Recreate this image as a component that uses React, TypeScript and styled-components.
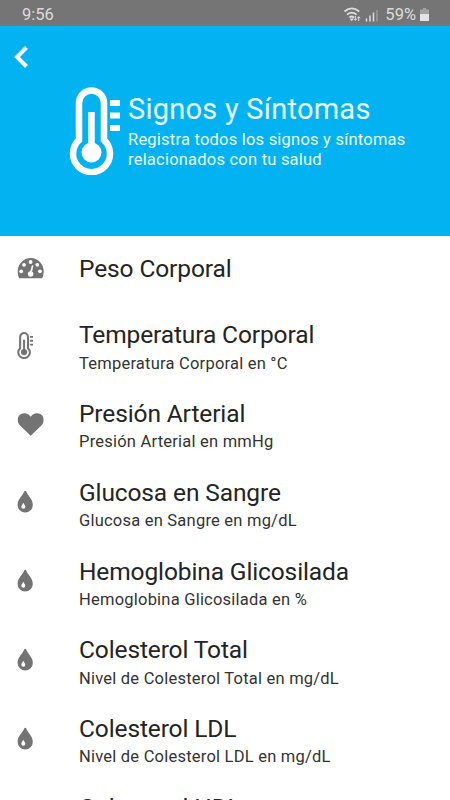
import React from "react";
import styled, { createGlobalStyle } from "styled-components";

const GlobalStyle = createGlobalStyle`
  * { box-sizing: border-box; }
  body { margin: 0; background: #fff; font-family: Roboto, sans-serif; }
`;

const Screen = styled.div`
  width: 450px;
  height: 800px;
  overflow: hidden;
  background: #fff;
  display: flex;
  flex-direction: column;
`;

const StatusBar = styled.div`
  flex: none;
  height: 26px;
  background: #757575;
  color: #dcdcdc;
  display: flex;
  align-items: center;
  padding: 3px 21px 0 22px;
  font-size: 16.5px;
  line-height: 22px;
`;

const Clock = styled.span`
  flex: 1;
`;

const Battery = styled.span`
  margin: 0 4px 0 6px;
  letter-spacing: 0;
`;

const Header = styled.header`
  flex: none;
  height: 210px;
  background: #03b3f1;
  color: #e9fbff;
`;

const BackButton = styled.button`
  display: block;
  border: 0;
  padding: 0 0 0 14px;
  margin-top: 19px;
  height: 24px;
  background: none;
  line-height: 0;
`;

const Banner = styled.div`
  display: flex;
  padding: 18px 0 0 69px;
`;

const BannerText = styled.div`
  padding: 4px 0 0 8px;
`;

const Heading = styled.h1`
  margin: 0;
  font-size: 29px;
  line-height: 36px;
  font-weight: 400;
  letter-spacing: 0.24px;
  white-space: nowrap;
`;

const Lead = styled.p`
  margin: 3px 0 0;
  font-size: 16.5px;
  line-height: 20px;
  letter-spacing: 0.22px;
  white-space: nowrap;
`;

const List = styled.ul`
  flex: 1;
  min-height: 0;
  overflow: hidden;
  margin: 0;
  padding: 0;
  list-style: none;
`;

const Row = styled.li<{ $single?: boolean }>`
  display: flex;
  height: ${(p) => (p.$single ? "73.5px" : "78.75px")};
  padding: ${(p) => (p.$single ? "19px" : "11.9px")} 0 0 17px;
`;

const IconSlot = styled.span<{ $top: number }>`
  width: 62px;
  flex: none;
  padding-top: ${(p) => p.$top}px;
  line-height: 0;
`;

const Title = styled.div`
  font-size: 24.5px;
  line-height: 28px;
  letter-spacing: -0.12px;
  color: #242424;
  font-weight: 400;
  white-space: nowrap;
`;

const Detail = styled.div`
  margin-top: 4.3px;
  font-size: 16.5px;
  line-height: 20px;
  letter-spacing: 0.22px;
  color: #333;
  font-weight: 400;
  white-space: nowrap;
`;

const Thermometer = ({ width, height, color }: { width: number; height: number; color: string }) => (
  <svg width={width} height={height} viewBox="0 0 51 88" preserveAspectRatio="none" fill="none">
    <path
      d="M10 53V16a12.5 12.5 0 0 1 25 0v37a18.5 18.5 0 1 1-25 0Z"
      stroke={color}
      strokeWidth="6.5"
    />
    <path d="M22.5 25v40" stroke={color} strokeWidth="6.5" />
    <circle cx="22.5" cy="65.500" r="10" fill={color} />
    <path d="M41 16h10M41 28.500h10M41 41h10" stroke={color} strokeWidth="6" />
  </svg>
);

const Gauge = () => (
  <svg width="27" height="22" viewBox="0 0 27 22">
    <path d="M2.300 21.200C1.200 19 .7 16.900.7 14.400a13 13.400 0 0 1 26 0c0 2.500-.5 4.600-1.600 6.800Z" fill="#737373" />
    <g fill="#fff">
      <circle cx="4.200" cy="14.300" r="1.900" />
      <circle cx="7" cy="7.800" r="1.900" />
      <circle cx="13.600" cy="5" r="1.900" />
      <circle cx="20.300" cy="7.800" r="1.900" />
      <circle cx="23" cy="14.300" r="1.900" />
      <circle cx="13.600" cy="17" r="2.700" />
      <path d="m12.800 15.500 2.200-7.300 1.400.4-1.600 7.500Z" />
    </g>
  </svg>
);

const Heart = () => (
  <svg width="27" height="23" viewBox="0 0 27 23">
    <path
      d="M13.700 22.800 2.800 12.200C-.7 8.500.2.300 7.300.3c3 0 5.100 1.700 6.400 3.400C15 2 17.100.3 20.100.3c7.100 0 8 8.200 4.500 11.900Z"
      fill="#737373"
    />
  </svg>
);

const Drop = () => (
  <svg width="17" height="23" viewBox="0 0 17 23">
    <path
      d="M8.200.7c.4 0 .8.300 1 .9C10.500 6 15.800 9 15.800 14.900a7.600 7.500 0 0 1-15.200 0C.6 9 5.900 6 7.200 1.600c.2-.6.600-.9 1-.9Z"
      fill="#737373"
    />
    <path d="M6.300 12.700c.5 1.700 2 2.300 2 4a2 2 0 0 1-4 0c0-1.700 1.500-2.300 2-4Z" fill="#fff" />
  </svg>
);

const Signals = () => (
  <svg width="36" height="16" viewBox="0 0 36 16" fill="none" stroke="#dcdcdc">
    <path d="M1.500 4.500Q8.800-1.800 16.200 4.500M4 7.600q4.800-4 9.600 0M6.500 10.500q2.300-2 4.600 0" strokeWidth="1.700" />
    <path d="m7.500 11.500 1.300 1.700 1.300-1.700" strokeWidth="1.300" />
    <path d="M12.400 9v4M15.700 10v4" strokeWidth="1" />
    <path d="m11 11.700 1.400 1.700 1.400-1.700M14.300 11.300l1.400-1.700 1.400 1.700" strokeWidth="1" />
    <path d="M23.500 11.500v3M27 8.500v6M30.500 5.500v9" strokeWidth="1.500" />
    <path d="M34 3v11.500" strokeWidth="1.300" opacity=".45" />
  </svg>
);

const BatteryIcon = () => (
  <svg width="9" height="13" viewBox="0 0 9 13">
    <path d="M3 0h3v1.500h3V6H0V1.500h3Z" fill="#a2a2a2" />
    <path d="M0 6h9v7H0Z" fill="#e3e3e3" />
  </svg>
);

const entries = [
  { title: "Peso Corporal", icon: <Gauge />, top: 2 },
  { title: "Temperatura Corporal", detail: "Temperatura Corporal en °C", icon: <Thermometer width={16} height={27} color="#737373" />, top: 10.5 },
  { title: "Presión Arterial", detail: "Presión Arterial en mmHg", icon: <Heart />, top: 12.5 },
  { title: "Glucosa en Sangre", detail: "Glucosa en Sangre en mg/dL", icon: <Drop />, top: 11.5 },
  { title: "Hemoglobina Glicosilada", detail: "Hemoglobina Glicosilada en %", icon: <Drop />, top: 11.5 },
  { title: "Colesterol Total", detail: "Nivel de Colesterol Total en mg/dL", icon: <Drop />, top: 11.5 },
  { title: "Colesterol LDL", detail: "Nivel de Colesterol LDL en mg/dL", icon: <Drop />, top: 11.5 },
  { title: "Colesterol HDL", detail: "Nivel de Colesterol HDL en mg/dL", icon: <Drop />, top: 11.5 },
];

export default function App() {
  return (
    <>
      <GlobalStyle />
      <Screen>
        <StatusBar>
          <Clock>9:56</Clock>
          <Signals />
          <Battery>59%</Battery>
          <BatteryIcon />
        </StatusBar>
        <Header>
          <BackButton aria-label="Volver">
            <svg width="16" height="24" viewBox="0 0 16 24" fill="none" stroke="#fff" strokeWidth="4">
              <path d="m12.500 2.500-9.500 9.500 9.500 9.500" />
            </svg>
          </BackButton>
          <Banner>
            <Thermometer width={51} height={88} color="#fff" />
            <BannerText>
              <Heading>Signos y Síntomas</Heading>
              <Lead>
                Registra todos los signos y síntomas
                <br />
                relacionados con tu salud
              </Lead>
            </BannerText>
          </Banner>
        </Header>
        <List>
          {entries.map((e) => (
            <Row key={e.title} $single={!e.detail}>
              <IconSlot $top={e.top}>{e.icon}</IconSlot>
              <div>
                <Title>{e.title}</Title>
                {e.detail && <Detail>{e.detail}</Detail>}
              </div>
            </Row>
          ))}
        </List>
      </Screen>
    </>
  );
}
